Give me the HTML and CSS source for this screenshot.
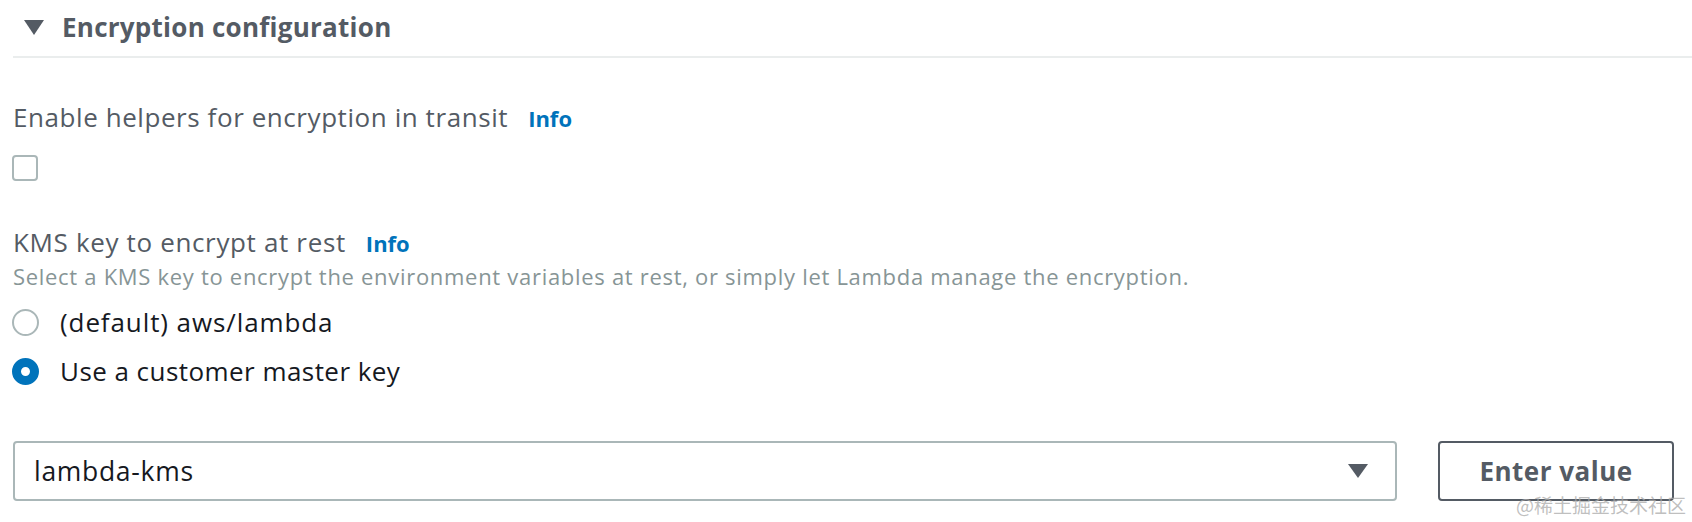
FILE: index.html
```html
<!DOCTYPE html>
<html lang="en">
<head>
<meta charset="utf-8">
<title>Encryption configuration</title>
<link rel="stylesheet" href="styles.css">
</head>
<body>
<div class="panel">
  <div class="header">
    <span class="caret"></span>
    <h2 class="title">Encryption configuration</h2>
  </div>
  <div class="content">
    <div class="field field-transit">
      <div class="label-row">
        <span class="label">Enable helpers for encryption in transit</span>
        <a class="info">Info</a>
      </div>
      <span class="checkbox"></span>
    </div>
    <div class="field field-kms">
      <div class="label-row">
        <span class="label label-kms">KMS key to encrypt at rest</span>
        <a class="info">Info</a>
      </div>
      <div class="desc">Select a KMS key to encrypt the environment variables at rest, or simply let Lambda manage the encryption.</div>
      <div class="radio-row first">
        <span class="radio"></span>
        <span class="radio-text">(default) aws/lambda</span>
      </div>
      <div class="radio-row second">
        <span class="radio checked"></span>
        <span class="radio-text">Use a customer master key</span>
      </div>
    </div>
    <div class="select-row">
      <div class="select">
        <span class="select-value">lambda-kms</span>
        <svg class="select-arrow" width="20" height="14" viewBox="0 0 20 14"><path d="M0 0H20L10 14Z" fill="#545b64"/></svg>
      </div>
      <button class="btn">Enter value</button>
    </div>
  </div>
  <div class="watermark">@稀土掘金技术社区</div>
</div>
</body>
</html>
```
FILE: styles.css
```css
html, body {
  margin: 0;
  padding: 0;
  background: #ffffff;
}
body {
  font-family: "Open Sans", "Noto Sans", "Noto Sans CJK SC", sans-serif;
  color: #545b64;
}
.panel {
  position: relative;
  width: 1692px;
  height: 522px;
  overflow: hidden;
}
.header {
  margin-left: 13px;
  padding: 12px 0 14px 11px;
  border-bottom: 2px solid #eaeded;
  display: flex;
  align-items: center;
}
.caret {
  width: 0;
  height: 0;
  border-left: 10px solid transparent;
  border-right: 10px solid transparent;
  border-top: 15px solid #545b64;
}
.title {
  margin: 0 0 0 18px;
  font-size: 26px;
  line-height: 30px;
  font-weight: 700;
  letter-spacing: 0.25px;
  color: #545b64;
}
.content {
  padding-left: 12px;
}
.field-transit {
  margin-top: 44px;
}
.field-kms {
  margin-top: 46px;
}
.label-row {
  display: flex;
  align-items: baseline;
  padding-left: 1px;
  line-height: 30px;
}
.label {
  font-size: 26px;
  letter-spacing: 0.57px;
  color: #545b64;
}
.label-kms {
  letter-spacing: 0.65px;
}
.info {
  margin-left: 20px;
  font-size: 22px;
  font-weight: 700;
  color: #0073bb;
}
.checkbox {
  display: block;
  margin-top: 22px;
  width: 26px;
  height: 26px;
  box-sizing: border-box;
  border: 2px solid #aab7b8;
  border-radius: 4px;
}
.desc {
  margin-top: 5px;
  padding-left: 1px;
  font-size: 22px;
  line-height: 26px;
  letter-spacing: 0.7px;
  color: #879596;
}
.radio-row {
  display: flex;
  align-items: center;
  height: 30px;
}
.radio-row.first {
  margin-top: 18px;
}
.radio-row.second {
  margin-top: 19px;
}
.radio {
  width: 27px;
  height: 27px;
  box-sizing: border-box;
  border: 2px solid #aab7b8;
  border-radius: 50%;
  background: #ffffff;
  flex: none;
}
.radio.checked {
  border: 9px solid #0073bb;
}
.radio-text {
  margin-left: 21px;
  font-size: 26px;
  line-height: 30px;
  letter-spacing: 0.55px;
  color: #16191f;
}
.radio-row.first .radio-text {
  letter-spacing: 0.9px;
}
.radio-row.second .radio-text {
  letter-spacing: 0.45px;
}
.select-row {
  margin-top: 55px;
  display: flex;
  gap: 41px;
  padding-left: 1px;
}
.select {
  width: 1384px;
  height: 60px;
  box-sizing: border-box;
  border: 2px solid #aab7b8;
  border-radius: 4px;
  display: flex;
  align-items: center;
  justify-content: space-between;
  padding: 0 27px 0 19px;
}
.select-value {
  font-size: 26.5px;
  letter-spacing: 0.7px;
  color: #16191f;
}
.btn {
  width: 236px;
  height: 60px;
  box-sizing: border-box;
  border: 2px solid #545b64;
  border-radius: 4px;
  background: #ffffff;
  font-family: "Open Sans", "Noto Sans", sans-serif;
  font-size: 26px;
  font-weight: 700;
  letter-spacing: 0.5px;
  color: #545b64;
  padding: 0;
}
.watermark {
  position: absolute;
  left: 1516px;
  top: 494px;
  font-family: "Noto Sans CJK SC", sans-serif;
  font-size: 19px;
  line-height: 22px;
  color: rgba(170, 170, 170, 0.75);
}
```
